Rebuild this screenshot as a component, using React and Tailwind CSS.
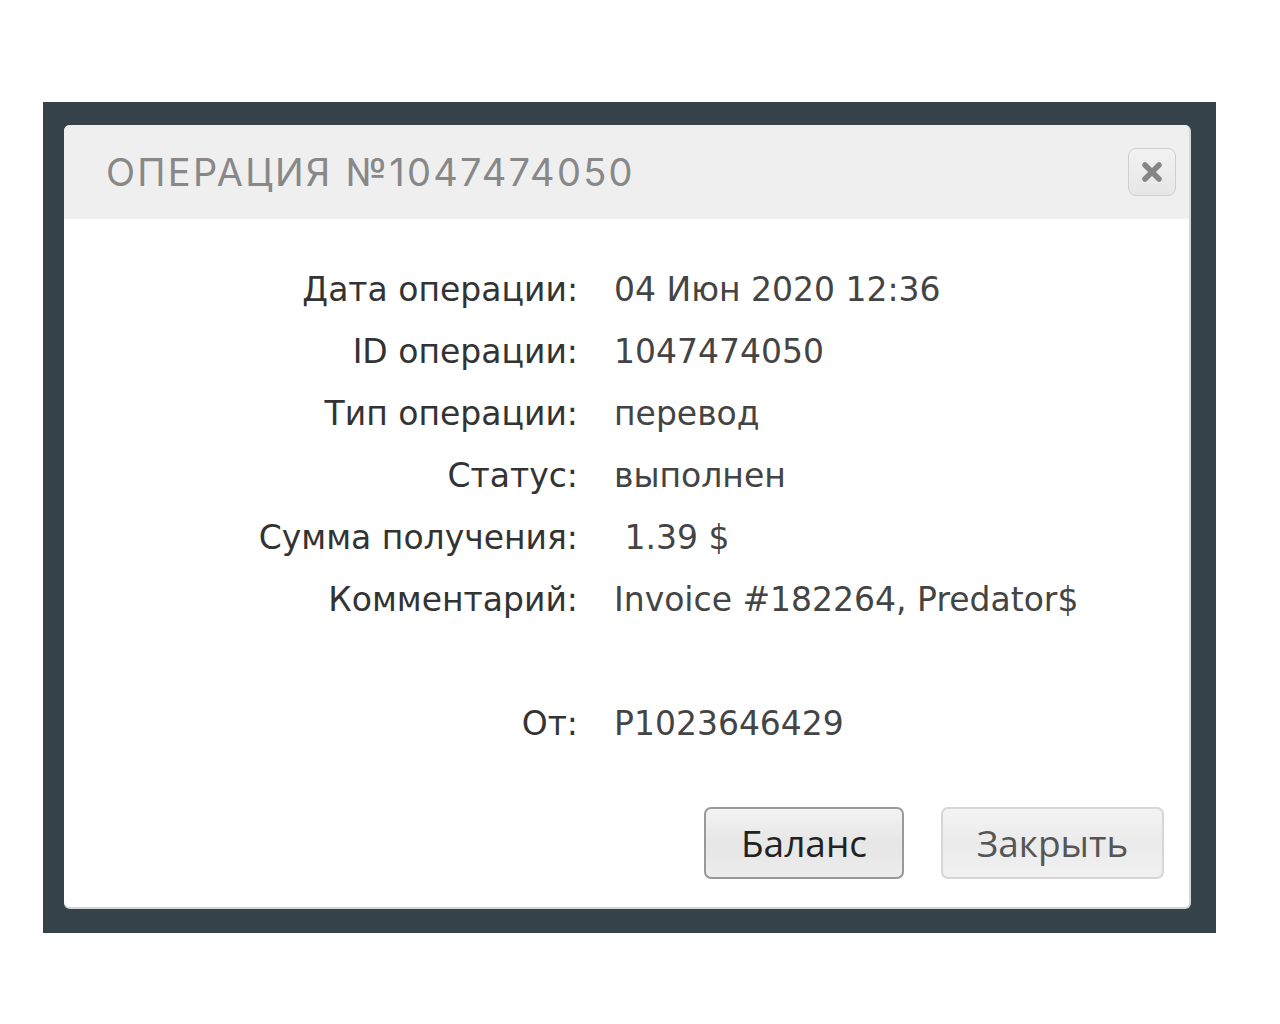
export default function App() {
  const rows = [
    ["Дата операции:", "04 Июн 2020 12:36"],
    ["ID операции:", "1047474050"],
    ["Тип операции:", "перевод"],
    ["Статус:", "выполнен"],
    ["Сумма получения:", "\u00a01.39 $"],
    ["Комментарий:", "Invoice #182264, Predator$"],
    ["", ""],
    ["От:", "P1023646429"],
  ];
  return (
    <div className="min-h-[1024px] w-[1280px] bg-white pt-[102px] pl-[43px]">
      <div className="w-[1173px] h-[831px] bg-[#37434a] pt-[23px] pl-[21px]">
        <div className="w-[1127px] h-[784px] bg-white rounded-[6px] overflow-hidden flex flex-col border-b-2 border-r-2 border-[#d4d6d8]">
          <div className="h-[94px] bg-[#efefef] flex items-center justify-between pl-[42px] pr-[13px] shrink-0">
            <div
              className="text-[38px] tracking-[0.06em] text-[#888888] leading-none"
              style={{ fontFamily: "Inter, 'Noto Sans', sans-serif" }}
            >
              ОПЕРАЦИЯ №1047474050
            </div>
            <div className="w-[48px] h-[48px] rounded-[8px] border border-[#cfcfcf] bg-gradient-to-b from-[#f2f2f2] to-[#e6e6e6] flex items-center justify-center">
              <svg width="22" height="22" viewBox="0 0 22 22">
                <path d="M4 4 L18 18 M18 4 L4 18" stroke="#858585" strokeWidth="5.5" strokeLinecap="round" />
              </svg>
            </div>
          </div>
          <div
            className="flex-1 flex flex-col pt-[40px]"
            style={{ fontFamily: "'DejaVu Sans', 'Noto Sans', sans-serif" }}
          >
            {rows.map(([l, v], i) => (
              <div key={i} className="flex h-[62px] items-center">
                <div className="w-[514px] text-right text-[33px] text-[#333333]">{l}</div>
                <div className="pl-[36px] text-[33px] text-[#444444] whitespace-pre">{v}</div>
              </div>
            ))}
            <div className="flex justify-end gap-[37px] pr-[25px] mt-[52px]">
              <button className="w-[200px] h-[72px] rounded-[7px] border-2 border-[#999999] bg-gradient-to-b from-[#f3f3f3] via-[#e6e6e6] to-[#ececec] text-[37px] text-[#222222]"
                style={{ fontFamily: "'Open Sans', 'Noto Sans', sans-serif" }}>
                Баланс
              </button>
              <button className="w-[223px] h-[72px] rounded-[7px] border-2 border-[#d6d6d6] bg-gradient-to-b from-[#f3f3f3] via-[#ebebeb] to-[#f0f0f0] text-[37px] text-[#555555]"
                style={{ fontFamily: "'Open Sans', 'Noto Sans', sans-serif" }}>
                Закрыть
              </button>
            </div>
          </div>
        </div>
      </div>
    </div>
  );
}
